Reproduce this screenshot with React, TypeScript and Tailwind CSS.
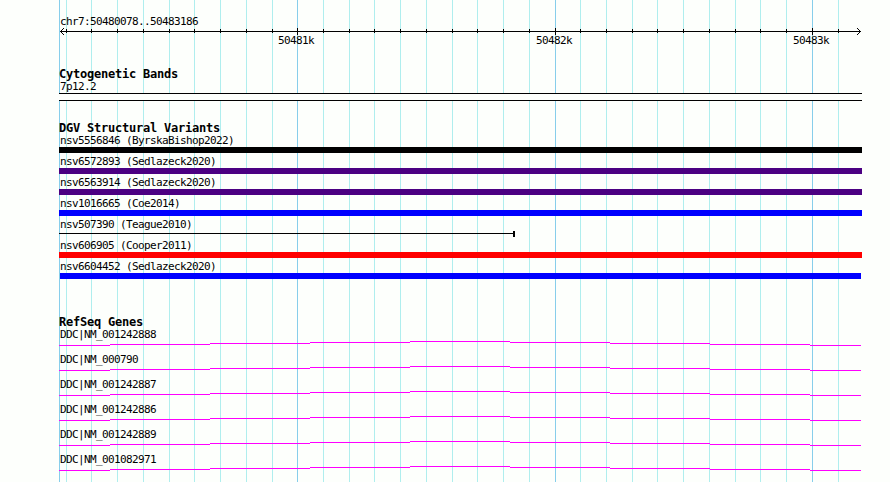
const MINOR_TICKS = [
  66, 91, 117, 143, 169, 194, 220, 246, 272, 323, 349, 374, 400, 426, 452, 477,
  503, 529, 580, 606, 632, 657, 683, 709, 735, 760, 786, 838,
]

const MAJOR_TICKS = [
  { x: 297, label: '50481k', labelX: 278 },
  { x: 555, label: '50482k', labelX: 536 },
  { x: 812, label: '50483k', labelX: 793 },
]

const VARIANTS = [
  { name: 'nsv5556846 (ByrskaBishop2022)', bar: 'bg-black' },
  { name: 'nsv6572893 (Sedlazeck2020)', bar: 'bg-[#4b0082]' },
  { name: 'nsv6563914 (Sedlazeck2020)', bar: 'bg-[#4b0082]' },
  { name: 'nsv1016665 (Coe2014)', bar: 'bg-[#0000ff]' },
  { name: 'nsv507390 (Teague2010)', bar: null },
  { name: 'nsv606905 (Cooper2011)', bar: 'bg-[#ff0000]' },
  { name: 'nsv6604452 (Sedlazeck2020)', bar: 'ml-px mr-px bg-[#0000ff]' },
]

const GENES = [
  'DDC|NM_001242888',
  'DDC|NM_000790',
  'DDC|NM_001242887',
  'DDC|NM_001242886',
  'DDC|NM_001242889',
  'DDC|NM_001082971',
]

// Intron line climbs one pixel every 100px up to the middle, then drops again
const INTRON = [
  { x: 0, y: 4, w: 51 },
  { x: 51, y: 3, w: 100 },
  { x: 151, y: 2, w: 100 },
  { x: 251, y: 1, w: 100 },
  { x: 351, y: 0, w: 100 },
  { x: 451, y: 1, w: 100 },
  { x: 551, y: 2, w: 100 },
  { x: 651, y: 3, w: 100 },
  { x: 751, y: 4, w: 51 },
]

function GridLines() {
  return (
    <svg className="[grid-area:1/1]" width="890" height="482" shapeRendering="crispEdges">
      {MINOR_TICKS.map((x) => (
        <rect key={x} x={x} y="0" width="1" height="482" fill="#afeeee" />
      ))}
      <rect x="59" y="0" width="1" height="482" fill="#87ceeb" />
      {MAJOR_TICKS.map((t) => (
        <rect key={t.x} x={t.x} y="0" width="1" height="482" fill="#87ceeb" />
      ))}
    </svg>
  )
}

function Ruler() {
  return (
    <svg className="-ml-[59px] block" width="890" height="24" shapeRendering="crispEdges">
      <rect x="60" y="5" width="801" height="1" />
      <path d="M64 2 L60.5 5.5 L64 9 M857 2 L860.5 5.5 L857 9" fill="none" stroke="#000" />
      {MINOR_TICKS.map((x) => (
        <rect key={x} x={x} y="3" width="1" height="4" />
      ))}
      {MAJOR_TICKS.map((t) => (
        <g key={t.x}>
          <rect x={t.x} y="2" width="1" height="7" />
          <text x={t.labelX} y="18">{t.label}</text>
        </g>
      ))}
    </svg>
  )
}

function Heading({ children }: { children: string }) {
  return <h2 className="h-3 text-[12px] leading-3 font-bold tracking-[-0.225px]">{children}</h2>
}

function Label({ children }: { children: string }) {
  return <div className="h-[15px] pl-px leading-[17px]">{children}</div>
}

export default function App() {
  return (
    <div className="grid h-[482px] w-[890px] overflow-hidden bg-[#fdfffc] font-['DejaVu_Sans_Mono',monospace] text-[11px] tracking-[-0.622px] whitespace-pre text-black">
      <GridLines />

      <main className="ml-[59px] flex w-[803px] flex-col pt-[13px] [grid-area:1/1]">
        <div className="h-[13px] pl-px leading-[17px]">chr7:50480078..50483186</div>
        <Ruler />

        {/* Cytogenetic Bands */}
        <section className="mt-[18px]">
          <Heading>Cytogenetic Bands</Heading>
          <div className="h-[13px] pl-px leading-[13px]">7p12.2</div>
          <div className="h-2 border-y border-black bg-[#fdfffc]" />
        </section>

        {/* DGV Structural Variants */}
        <section className="mt-[21px]">
          <div className="h-[10px]">
            <Heading>DGV Structural Variants</Heading>
          </div>
          {VARIANTS.map((v) => (
            <div key={v.name}>
              <Label>{v.name}</Label>
              {v.bar ? (
                <div className={`h-1.5 ${v.bar}`} />
              ) : (
                <div className="flex h-1.5">
                  <div className="mt-0.5 h-px w-[454px] bg-black" />
                  <div className="h-1.5 w-0.5 bg-black" />
                </div>
              )}
            </div>
          ))}
        </section>

        {/* RefSeq Genes */}
        <section className="mt-[37px]">
          <div className="h-[10px]">
            <Heading>RefSeq Genes</Heading>
          </div>
          {GENES.map((gene) => (
            <div key={gene} className="h-[25px]">
              <Label>{gene}</Label>
              <svg className="block" width="803" height="5" shapeRendering="crispEdges">
                {INTRON.map((s) => (
                  <rect key={s.x} x={s.x} y={s.y} width={s.w} height="1" fill="#ff00ff" />
                ))}
              </svg>
            </div>
          ))}
        </section>
      </main>
    </div>
  )
}
